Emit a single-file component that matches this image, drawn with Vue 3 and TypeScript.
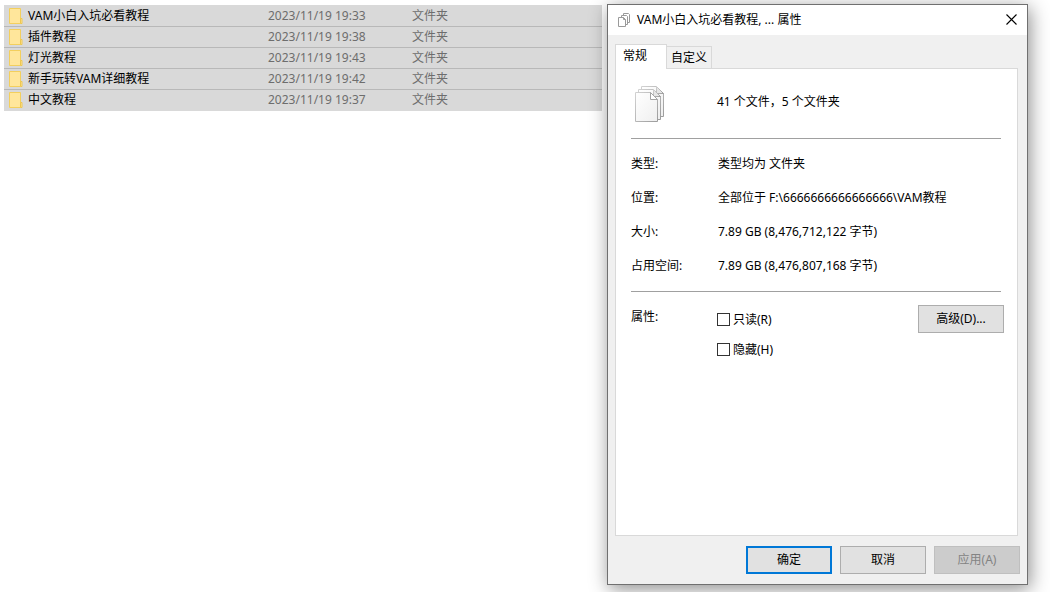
<script setup lang="ts">
interface Folder {
  name: string
  modified: string
  kind: string
}

interface Detail {
  label: string
  value: string
}

const folders: Folder[] = [
  { name: 'VAM小白入坑必看教程', modified: '2023/11/19 19:33', kind: '文件夹' },
  { name: '插件教程', modified: '2023/11/19 19:38', kind: '文件夹' },
  { name: '灯光教程', modified: '2023/11/19 19:43', kind: '文件夹' },
  { name: '新手玩转VAM详细教程', modified: '2023/11/19 19:42', kind: '文件夹' },
  { name: '中文教程', modified: '2023/11/19 19:37', kind: '文件夹' },
]

const details: Detail[] = [
  { label: '类型:', value: '类型均为 文件夹' },
  { label: '位置:', value: '全部位于 F:\\6666666666666666\\VAM教程' },
  { label: '大小:', value: '7.89 GB (8,476,712,122 字节)' },
  { label: '占用空间:', value: '7.89 GB (8,476,807,168 字节)' },
]
</script>

<template>
  <main class="desktop" lang="zh-CN">
    <div class="explorer">
      <table class="files">
        <colgroup>
          <col class="col-name" />
          <col class="col-date" />
          <col />
        </colgroup>
        <tbody>
          <tr v-for="folder in folders" :key="folder.name">
            <td>
              <div class="name">
                <svg class="folder" viewBox="0 0 14 16" aria-hidden="true">
                  <path d="M.5.5h11v15H.5z" fill="#ffe69b" stroke="#f3cf5d" />
                  <path d="M11.500 15.500v-5h1.500v5z" fill="#ffe69b" stroke="#edc752" />
                </svg>
                <span>{{ folder.name }}</span>
              </div>
            </td>
            <td class="muted">{{ folder.modified }}</td>
            <td class="muted">{{ folder.kind }}</td>
          </tr>
        </tbody>
      </table>
    </div>

    <section class="dialog" role="dialog" aria-labelledby="dialog-title">
      <header class="titlebar">
        <svg class="title-icon" viewBox="0 0 12 14" aria-hidden="true">
          <g fill="#fff" stroke="#9a9a9a">
            <path d="M5.500.5h5l1 1v8h-6z" />
            <path d="M3.500 2.500h5l1 1v8h-6z" />
            <path d="M.5 4.500h5l2 2v7h-7z" />
            <path d="M5.500 4.500v2h2" fill="none" />
          </g>
        </svg>
        <h1 id="dialog-title">VAM小白入坑必看教程, ... 属性</h1>
        <button class="close" type="button" aria-label="关闭">
          <svg viewBox="0 0 11 11" aria-hidden="true">
            <path d="M.5.5l10 10M10.500.5l-10 10" stroke="#000" stroke-width="1.100" />
          </svg>
        </button>
      </header>

      <div class="body">
        <div class="tabs" role="tablist">
          <button class="tab active" type="button" role="tab" aria-selected="true">常规</button>
          <button class="tab" type="button" role="tab" aria-selected="false">自定义</button>
        </div>

        <div class="panel" role="tabpanel">
          <div class="summary">
            <svg class="files-icon" viewBox="0 0 32 38" aria-hidden="true">
              <defs>
                <linearGradient id="paper" x1="0" y1="0" x2="1" y2="1">
                  <stop offset="0" stop-color="#fff" />
                  <stop offset="1" stop-color="#efefef" />
                </linearGradient>
                <linearGradient id="edge" x1="0" y1="0" x2="1" y2="1">
                  <stop offset="0" stop-color="#d2d2d2" />
                  <stop offset="1" stop-color="#9c9c9c" />
                </linearGradient>
              </defs>
              <g fill="url(#paper)" stroke="url(#edge)">
                <path d="M7.500 1.500h15l7 7v23h-22z" />
                <path d="M4.500 4.500h15l7 7v23h-22z" />
                <path d="M1.500 7.500h15l7 7v22h-22z" />
                <path d="M22.500 1.500v7h7z" fill="#e6e6e6" />
                <path d="M19.500 4.500v7h7z" fill="#e6e6e6" />
                <path d="M16.500 7.500v7h7z" fill="#fff" stroke="#a4a4a4" />
              </g>
            </svg>
            <span>41 个文件，5 个文件夹</span>
          </div>

          <dl class="details">
            <template v-for="detail in details" :key="detail.label">
              <dt>{{ detail.label }}</dt>
              <dd>{{ detail.value }}</dd>
            </template>
          </dl>

          <div class="attributes">
            <span id="attributes-label" class="attributes-label">属性:</span>
            <div class="checks" role="group" aria-labelledby="attributes-label">
              <label><input type="checkbox" />只读(R)</label>
              <label><input type="checkbox" />隐藏(H)</label>
            </div>
            <button class="btn advanced" type="button">高级(D)...</button>
          </div>
        </div>

        <footer class="actions">
          <button class="btn primary" type="button">确定</button>
          <button class="btn" type="button">取消</button>
          <button class="btn" type="button" disabled>应用(A)</button>
        </footer>
      </div>
    </section>
  </main>
</template>

<style>
body {
  margin: 0;
  background: #fff;
}
</style>

<style scoped>
.desktop {
  box-sizing: border-box;
  display: grid;
  grid-template-columns: minmax(0, 598fr) minmax(0, 421fr);
  gap: 5px;
  min-height: 100vh;
  padding: 4px 22px 7px 4px;
  overflow: hidden;
  font: 12px/16px 'Noto Sans', 'Noto Sans CJK SC', sans-serif;
  color: #000;
}

button {
  padding: 0;
  font: inherit;
  color: inherit;
}

.explorer {
  padding-top: 1px;
}

.files {
  width: 100%;
  padding-top: 1px;
  background: #d9d9d9;
  border-spacing: 0;
  table-layout: fixed;
}

.col-name {
  width: 264px;
}

.col-date {
  width: 144px;
}

.files td {
  height: 20px;
  padding: 0;
  border-bottom: 1px solid #b8b8b8;
  white-space: nowrap;
}

.files tr:last-child td {
  border-bottom-color: transparent;
}

.name {
  display: flex;
  align-items: center;
  gap: 5px;
  padding-left: 5px;
}

.folder {
  width: 14px;
  height: 16px;
}

.muted {
  color: #6d6d6d;
}

.dialog {
  z-index: 1;
  display: flex;
  flex-direction: column;
  border: 1px solid #707070;
  background: #f0f0f0;
  box-shadow: 2px 4px 18px rgba(0, 0, 0, 0.45);
}

.titlebar {
  display: flex;
  align-items: center;
  height: 30px;
  padding: 0 10px;
  background: #fff;
}

.title-icon {
  width: 12px;
  height: 14px;
  margin-right: 7px;
}

h1 {
  flex: 1;
  margin: 0;
  font-size: 12px;
  font-weight: 400;
}

.close {
  display: flex;
  padding-bottom: 1px;
  border: 0;
  background: none;
}

.close svg {
  width: 11px;
  height: 11px;
}

.body {
  display: flex;
  flex: 1;
  flex-direction: column;
  padding: 9px 7px 10px;
}

.tabs {
  z-index: 1;
  display: flex;
  align-items: flex-end;
}

.tab {
  height: 22px;
  padding: 0 4px;
  border: 1px solid #d9d9d9;
  border-width: 1px 1px 0 0;
  background: #f0f0f0;
}

.tab.active {
  height: 25px;
  margin-bottom: -1px;
  padding: 0 19px 2px 7px;
  border-left-width: 1px;
  background: #fff;
}

.panel {
  flex: 1;
  margin-right: 2px;
  padding: 0 16px 0 15px;
  border: 1px solid #d9d9d9;
  background: #fff;
}

.summary {
  display: flex;
  align-items: center;
  gap: 51px;
  height: 69px;
  padding-left: 3px;
  border-bottom: 1px solid #a0a0a0;
}

.summary span {
  padding-bottom: 3px;
}

.files-icon {
  width: 32px;
  height: 38px;
}

.details {
  display: grid;
  grid-template-columns: 87px 1fr;
  margin: 0;
  padding: 8px 0;
  border-bottom: 1px solid #a0a0a0;
  line-height: 34px;
}

.details dd {
  margin: 0;
  white-space: nowrap;
}

.attributes {
  display: flex;
  align-items: flex-start;
  padding-top: 13px;
}

.attributes-label {
  width: 86px;
  line-height: 24px;
}

.checks {
  display: flex;
  flex: 1;
  flex-direction: column;
  align-items: flex-start;
  gap: 1px;
}

.checks label {
  display: flex;
  align-items: center;
  gap: 3px;
  height: 29px;
}

.checks input {
  width: 13px;
  height: 13px;
  margin: 0;
  border: 1px solid #333;
  background: #fff;
  appearance: none;
}

.checks input:checked {
  background: #0078d7;
}

.btn {
  width: 86px;
  height: 28px;
  border: 1px solid #adadad;
  background: #e1e1e1;
}

.btn.primary {
  border: 2px solid #0078d7;
}

.btn:disabled {
  border-color: #bfbfbf;
  background: #ccc;
  color: #838383;
}

.advanced {
  margin-right: -3px;
}

.actions {
  display: flex;
  justify-content: flex-end;
  gap: 8px;
  padding-top: 10px;
}
</style>
